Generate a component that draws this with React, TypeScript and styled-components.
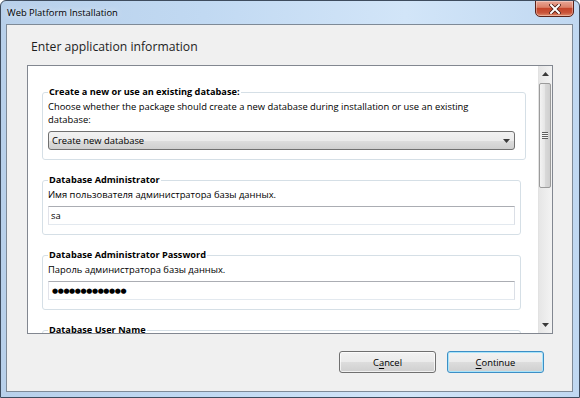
import React from "react";
import styled, { createGlobalStyle } from "styled-components";

const GlobalStyle = createGlobalStyle`
  html, body {
    margin: 0;
    padding: 0;
  }
  body {
    width: 580px;
    height: 398px;
    overflow: hidden;
    font-family: "Open Sans", "Noto Sans", sans-serif;
    font-size: 9.4px;
    color: #000;
  }
  * {
    box-sizing: border-box;
  }
`;

const Window = styled.div`
  width: 580px;
  height: 398px;
  display: flex;
  flex-direction: column;
  border: 1px solid #3e4c5e;
  border-radius: 6px 6px 0 0;
  background: linear-gradient(90deg, #b8d0ea 0%, #c1d9f2 35%, #d2e5f8 70%, #c0d8f1 100%);
  overflow: hidden;
`;

const TitleBar = styled.div`
  height: 23px;
  flex-shrink: 0;
  display: flex;
  justify-content: space-between;
  align-items: flex-start;
`;

const Title = styled.div`
  padding: 5px 0 0 6px;
  line-height: 13px;
  text-shadow: 0 0 6px rgba(255, 255, 255, 0.9);
`;

const CloseButton = styled.div`
  width: 39px;
  height: 17px;
  margin: -1px 5px 0 0;
  display: flex;
  align-items: center;
  justify-content: center;
  border: 1px solid #5a2219;
  border-radius: 0 0 5px 5px;
  background: linear-gradient(180deg, #e9a797 0%, #dc8068 42%, #c5452a 50%, #c9543a 78%, #df8c6c 100%);
  box-shadow: inset 0 0 0 1px rgba(255, 255, 255, 0.35);
`;

const Client = styled.div`
  flex: 1;
  margin: 0 6px 5px 5px;
  border: 1px solid #7e8a97;
  background: #f0f0f0;
  display: flex;
  flex-direction: column;
`;

const Heading = styled.div`
  margin: 14px 0 0 24px;
  font-size: 12.2px;
  line-height: 16px;
  color: #1e1e1e;
`;

const Panel = styled.div`
  height: 269px;
  margin: 10px 19px 0 20px;
  border: 1px solid #828790;
  background: #fff;
  display: flex;
`;

const Content = styled.div`
  flex: 1;
  overflow: hidden;
  padding: 19px 12px 0 14px;
`;

const Group = styled.fieldset<{ $wide?: boolean }>`
  min-width: 0;
  margin: 0 ${(p) => (p.$wide ? 0 : 5)}px 13px 0;
  padding: 0 ${(p) => (p.$wide ? 10 : 5)}px 9px 5px;
  border: 1px solid #d5dfe6;
  border-radius: 3px;
`;

const Legend = styled.legend`
  padding: 0 1px;
  font-size: 9.2px;
  font-weight: 700;
  line-height: 14px;
`;

const Desc = styled.div`
  max-width: 440px;
  padding-top: 1px;
  line-height: 13px;
`;

const Select = styled.div`
  height: 19px;
  margin-top: 5px;
  padding: 0 4px 0 3px;
  display: flex;
  align-items: center;
  justify-content: space-between;
  border: 1px solid #707070;
  border-radius: 3px;
  background: linear-gradient(180deg, #f2f2f2 0%, #ebebeb 50%, #dddddd 51%, #cfcfcf 100%);
`;

const TextBox = styled.div`
  height: 19px;
  margin-top: 5px;
  padding-left: 2px;
  display: flex;
  align-items: center;
  border: 1px solid;
  border-color: #abadb3 #dbdfe6 #e3e9ef #e2e3ea;
  background: #fff;
`;

const Dots = styled.span`
  font-family: "DejaVu Sans", sans-serif;
  font-size: 7px;
  letter-spacing: -0.4px;
  padding-left: 1px;
`;

const ScrollBar = styled.div`
  width: 14px;
  display: flex;
  flex-direction: column;
  border-left: 1px solid #e2e2e2;
  background: linear-gradient(90deg, #e6e6e6 0%, #f3f3f3 100%);
`;

const ArrowButton = styled.div`
  height: 16px;
  flex-shrink: 0;
  display: flex;
  align-items: center;
  justify-content: center;
`;

const Track = styled.div`
  flex: 1;
  padding: 1px 0 0 0;
`;

const Thumb = styled.div`
  height: 105px;
  width: 12px;
  display: flex;
  align-items: center;
  justify-content: center;
  border: 1px solid #9b9b9b;
  border-radius: 2px;
  background: linear-gradient(90deg, #f3f3f3 0%, #e6e6e6 45%, #d8d8d8 55%, #cfcfcf 100%);
`;

const Grip = styled.div`
  width: 6px;
  height: 7px;
  background: repeating-linear-gradient(180deg, #5f5f5f 0px, #5f5f5f 1px, #f5f5f5 1px, #f5f5f5 2px);
`;

const ButtonRow = styled.div`
  margin-top: 17px;
  padding-right: 28px;
  display: flex;
  justify-content: flex-end;
  gap: 11px;
`;

const Button = styled.div<{ $default?: boolean }>`
  width: 97px;
  height: 22px;
  display: flex;
  align-items: center;
  justify-content: center;
  border: 1px solid ${(p) => (p.$default ? "#3c8fc6" : "#707070")};
  border-radius: 3px;
  background: linear-gradient(180deg, #f2f2f2 0%, #ebebeb 50%, #dddddd 51%, #cfcfcf 100%);
  box-shadow: inset 0 0 0 1px ${(p) => (p.$default ? "#a9e4fa" : "rgba(255,255,255,0.7)")};
`;

const Key = styled.u`
  text-decoration-thickness: 1px;
  text-underline-offset: 2px;
`;

function Triangle({ down }: { down?: boolean }) {
  return (
    <svg width="7" height="4" viewBox="0 0 7 4">
      <path d={down ? "M0 0H7L3.5 4Z" : "M0 4H7L3.5 0Z"} fill="#3a3a3a" />
    </svg>
  );
}

function App() {
  return (
    <>
      <GlobalStyle />
      <Window>
        <TitleBar>
          <Title>Web Platform Installation</Title>
          <CloseButton>
            <svg width="12" height="10" viewBox="0 0 12 10">
              <path d="M2 1L10 9M10 1L2 9" stroke="#4a1a12" strokeWidth="3.6" strokeLinecap="square" />
              <path d="M2 1L10 9M10 1L2 9" stroke="#fff" strokeWidth="2" strokeLinecap="square" />
            </svg>
          </CloseButton>
        </TitleBar>
        <Client>
          <Heading>Enter application information</Heading>
          <Panel>
            <Content>
              <Group $wide>
                <Legend>Create a new or use an existing database:</Legend>
                <Desc>
                  Choose whether the package should create a new database during installation or use an existing
                  database:
                </Desc>
                <Select>
                  <span>Create new database</span>
                  <Triangle down />
                </Select>
              </Group>
              <Group>
                <Legend>Database Administrator</Legend>
                <Desc>Имя пользователя администратора базы данных.</Desc>
                <TextBox>sa</TextBox>
              </Group>
              <Group>
                <Legend>Database Administrator Password</Legend>
                <Desc>Пароль администратора базы данных.</Desc>
                <TextBox>
                  <Dots>●●●●●●●●●●●●●</Dots>
                </TextBox>
              </Group>
              <Group>
                <Legend>Database User Name</Legend>
              </Group>
            </Content>
            <ScrollBar>
              <ArrowButton>
                <Triangle />
              </ArrowButton>
              <Track>
                <Thumb>
                  <Grip />
                </Thumb>
              </Track>
              <ArrowButton>
                <Triangle down />
              </ArrowButton>
            </ScrollBar>
          </Panel>
          <ButtonRow>
            <Button>
              <span>
                C<Key>a</Key>ncel
              </span>
            </Button>
            <Button $default>
              <span>
                <Key>C</Key>ontinue
              </span>
            </Button>
          </ButtonRow>
        </Client>
      </Window>
    </>
  );
}

export default App;
